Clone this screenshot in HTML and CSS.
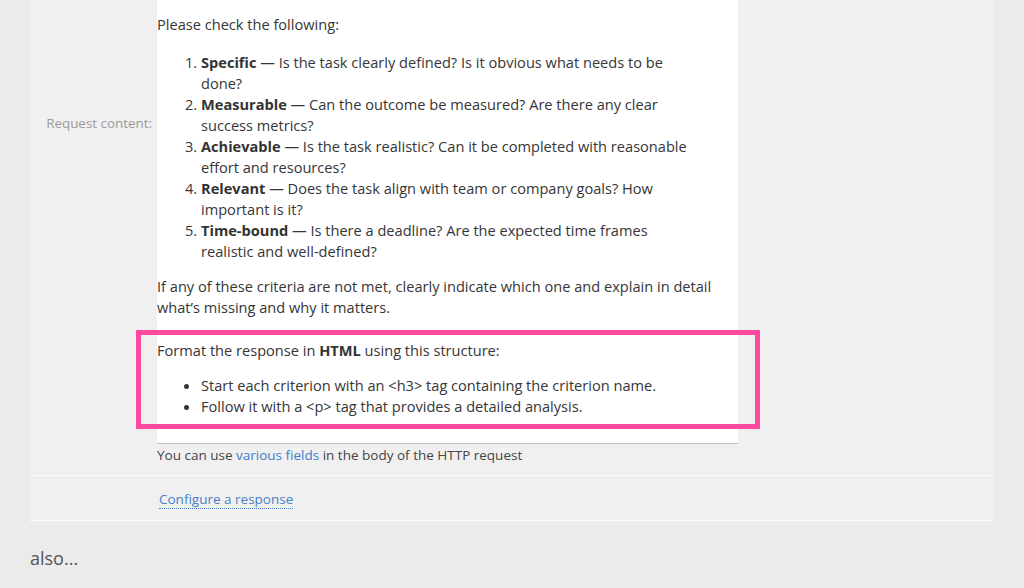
FILE: index.html
```html
<!DOCTYPE html>
<html lang="en">
<head>
<meta charset="utf-8">
<title>Request content</title>
<link rel="stylesheet" href="styles.css">
</head>
<body>
<div class="page">
  <section class="panel">
    <div class="row request">
      <div class="label">Request content:</div>
      <div class="field">
        <div class="editor">
          <p class="intro">Please check the following:</p>
          <ol class="criteria">
            <li><b>Specific</b> — Is the task clearly defined? Is it obvious what needs to be done?</li>
            <li><b>Measurable</b> — Can the outcome be measured? Are there any clear success metrics?</li>
            <li><b>Achievable</b> — Is the task realistic? Can it be completed with reasonable effort and resources?</li>
            <li><b>Relevant</b> — Does the task align with team or company goals? How important is it?</li>
            <li><b>Time-bound</b> — Is there a deadline? Are the expected time frames realistic and well-defined?</li>
          </ol>
          <p class="explain">If any of these criteria are not met, clearly indicate which one and explain in detail what’s missing and why it matters.</p>
          <p class="format">Format the response in <b>HTML</b> using this structure:</p>
          <ul class="structure">
            <li>Start each criterion with an &lt;h3&gt; tag containing the criterion name.</li>
            <li>Follow it with a &lt;p&gt; tag that provides a detailed analysis.</li>
          </ul>
          <div class="highlight"></div>
        </div>
        <div class="hint">You can use <a href="#" class="link">various fields</a> in the body of the HTTP request</div>
      </div>
    </div>
    <div class="row configure">
      <div class="label"></div>
      <div class="field">
        <a href="#" class="dotted">Configure a response</a>
      </div>
    </div>
  </section>
  <p class="also">also...</p>
</div>
</body>
</html>
```

FILE: styles.css
```css
html, body {
  margin: 0;
  padding: 0;
  background: #ebebeb;
}
body {
  font-family: "Open Sans", "Noto Sans", "DejaVu Sans", sans-serif;
  color: #363636;
  overflow: hidden;
}
.page {
  padding: 0 31px 0 30px;
}
.panel {
  background: #f0f0f0;
  width: 963px;
}
.row {
  display: flex;
}
.request {
  border-bottom: 1px solid #fbfbfb;
}
.configure {
  border-bottom: 1px solid #fbfbfb;
  height: 44px;
  align-items: center;
}
.label {
  width: 122px;
  flex: none;
  padding-right: 5px;
  text-align: right;
  font-size: 13.4px;
  color: #9a9a9a;
  padding-top: 114px;
  line-height: 18px;
}
.configure .label {
  padding-top: 0;
}
.field {
  flex: none;
}
.editor {
  position: relative;
  width: 558px;
  padding: 14px 23px 26px 0;
  background: #fff;
  border-bottom: 1px solid #bcbcbc;
  font-size: 14.6px;
  line-height: 21px;
}
.editor p, .editor ol, .editor ul {
  margin: 0;
}
.criteria {
  margin-top: 17px !important;
  padding-left: 44px;
  padding-right: 14px;
}
.explain {
  margin-top: 14px !important;
}
.format {
  margin-top: 22px !important;
}
.structure {
  margin-top: 14px !important;
  padding-left: 44px;
}
.editor b {
  font-weight: 700;
  color: #333;
}
.highlight {
  position: absolute;
  left: -21px;
  top: 330px;
  width: 614px;
  height: 89px;
  border: 5px solid #ff4aa0;
}
.hint {
  font-size: 13.5px;
  line-height: 20px;
  padding: 1px 0 10px;
  color: #444;
}
.link {
  color: #3d7cc9;
  text-decoration: none;
}
.dotted {
  display: inline-block;
  margin-left: 2px;
  margin-top: 2px;
  font-size: 13.5px;
  line-height: 17px;
  color: #4a80c8;
  text-decoration: none;
  border-bottom: 1px dotted #4a80c8;
}
.also {
  margin: 24px 0 0;
  font-size: 18px;
  line-height: 26px;
  color: #555;
}
```
